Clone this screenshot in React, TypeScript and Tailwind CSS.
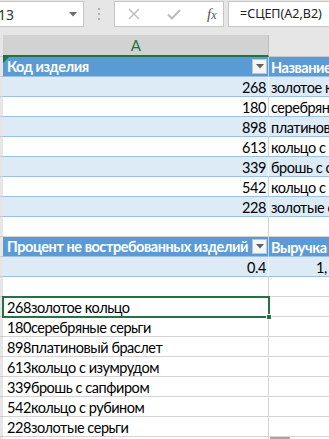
import React from 'react'

const items = [
  { code: 268, name: 'золотое кольцо' },
  { code: 180, name: 'серебряные серьги' },
  { code: 898, name: 'платиновый браслет' },
  { code: 613, name: 'кольцо с изумрудом' },
  { code: 339, name: 'брошь с сапфиром' },
  { code: 542, name: 'кольцо с рубином' },
  { code: 228, name: 'золотые серьги' },
]

const FilterButton = () => (
  <div className="flex h-[15px] w-[15px] shrink-0 items-center justify-center border border-[#c4c4c4] bg-[#f4f4f4]">
    <svg width="8" height="5" viewBox="0 0 8 5">
      <path d="M0 0h8L4 4.5z" fill="#606060" />
    </svg>
  </div>
)

type RowProps = {
  a?: React.ReactNode
  b?: React.ReactNode
  kind: 'head' | 'band' | 'plain' | 'grid'
  aRight?: boolean
}

const Row = ({ a, b, kind, aRight }: RowProps) => {
  const bg =
    kind === 'head' ? 'bg-[#5b9bd5] text-white font-bold' : kind === 'band' ? 'bg-[#ddebf7]' : 'bg-white'
  const line = kind === 'grid' ? 'border-[#d4d4d4]' : 'border-[#9bc2e6]'
  const vline = kind === 'band' || kind === 'head' ? 'border-r-white/60' : 'border-r-[#d4d4d4]'
  return (
    <div className="flex h-[20px] shrink-0">
      <div className="w-[3px] shrink-0 border-b border-b-[#c8c8c8] bg-[#e6e6e6]" />
      <div className={`flex w-[266px] shrink-0 items-center border-b border-r ${line} ${vline} ${bg}`}>
        {kind === 'head' ? (
          <div className="flex w-full items-center justify-between pl-[4px] pr-[1px]">
            <span className="whitespace-nowrap">{a}</span>
            <FilterButton />
          </div>
        ) : (
          <span className={`w-full whitespace-nowrap pt-[2px] ${aRight ? 'pr-[2px] text-right' : 'pl-[4px]'}`}>
            {a}
          </span>
        )}
      </div>
      <div className={`flex w-[200px] shrink-0 items-center border-b ${line} ${bg}`}>
        <span className="whitespace-nowrap pl-[2px] pt-[2px]">{b}</span>
      </div>
    </div>
  )
}

export default function App() {
  return (
    <div className="relative h-[439px] w-[329px] overflow-hidden bg-[#e6e6e6] font-['Lato',sans-serif] text-[14.5px] tracking-[-0.45px] text-black">
      {/* formula bar */}
      <div className="flex h-[35px] items-start pt-[1px] tracking-normal">
        <div className="flex h-[26px] w-[84px] items-center justify-between border border-l-0 border-[#c6c6c6] bg-white pr-[6px]">
          <span className="ml-[-2px] font-['Noto_Sans',sans-serif] text-[14px] text-[#333]">13</span>
          <svg width="8" height="5" viewBox="0 0 8 5">
            <path d="M0 0h8L4 4.5z" fill="#6e6e6e" />
          </svg>
        </div>
        <div className="flex h-[26px] w-[30px] flex-col items-center justify-center gap-[3px]">
          <span className="h-[2px] w-[2px] bg-[#b0b0b0]" />
          <span className="h-[2px] w-[2px] bg-[#b0b0b0]" />
          <span className="h-[2px] w-[2px] bg-[#b0b0b0]" />
        </div>
        <div className="flex h-[26px] w-[110px] items-center border border-[#c6c6c6] bg-white">
          <svg className="ml-[13px]" width="12" height="12" viewBox="0 0 12 12">
            <path d="M1 1l10 10M11 1L1 11" stroke="#bcbcbc" strokeWidth="1.4" />
          </svg>
          <svg className="ml-[27px]" width="14" height="11" viewBox="0 0 14 11">
            <path d="M1 5.5l4 4L13 1" stroke="#bcbcbc" strokeWidth="2" fill="none" />
          </svg>
          <span className="ml-[26px] font-['Liberation_Serif',serif] text-[15px] italic text-[#555]">
            f<span className="text-[12px]">x</span>
          </span>
        </div>
        <div className="ml-[4px] flex h-[26px] flex-1 items-center border border-r-0 border-[#c6c6c6] bg-white pl-[11px]">
          <span className="whitespace-nowrap font-['Noto_Sans',sans-serif] text-[12.5px] text-[#222]">=СЦЕП(A2,B2)</span>
        </div>
      </div>

      {/* column headers */}
      <div className="flex h-[22px]">
        <div className="w-[3px] shrink-0 border-b border-[#c8c8c8] bg-[#e6e6e6]" />
        <div className="flex w-[266px] shrink-0 items-center justify-center border-b-2 border-r border-b-[#217346] border-r-[#bdbdbd] bg-[#d2d2d2] text-[15px] text-[#217346]">
          A
        </div>
        <div className="flex-1 border-b border-[#c8c8c8] bg-[#e6e6e6]" />
      </div>

      <div className="flex flex-col">
        <Row kind="head" a="Код изделия" b="Название изделия" />
        {items.map((it, i) => (
          <Row key={it.code} kind={i % 2 === 0 ? 'band' : 'plain'} a={it.code} b={it.name} aRight />
        ))}
        <Row kind="grid" a="" b="" />
        <Row kind="head" a="Процент не востребованных изделий" b="Выручка" />
        <Row kind="band" a="0.4" b={<span className="pl-[45px]">1,</span>} aRight />
        <Row kind="grid" a="" b="" />
        {items.map((it) => (
          <Row key={`c${it.code}`} kind="grid" a={`${it.code}${it.name}`} b="" />
        ))}
        <Row kind="grid" a="" b="" />
      </div>

      {/* error indicator in A1 */}
      <svg className="absolute left-[3px] top-[57px]" width="6" height="6" viewBox="0 0 6 6">
        <path d="M0 0h6L0 6z" fill="#1e7145" />
      </svg>

      {/* selection of A13 */}
      <div className="pointer-events-none absolute left-[2px] top-[296px] h-[22px] w-[268px] border-2 border-[#217346]" />
      <div className="absolute left-[266px] top-[314px] h-[6px] w-[6px] border border-white bg-[#217346]" />

      <div className="absolute left-[270px] top-[437px] h-[2px] w-[20px] bg-[#a6a6a6]" />
    </div>
  )
}
